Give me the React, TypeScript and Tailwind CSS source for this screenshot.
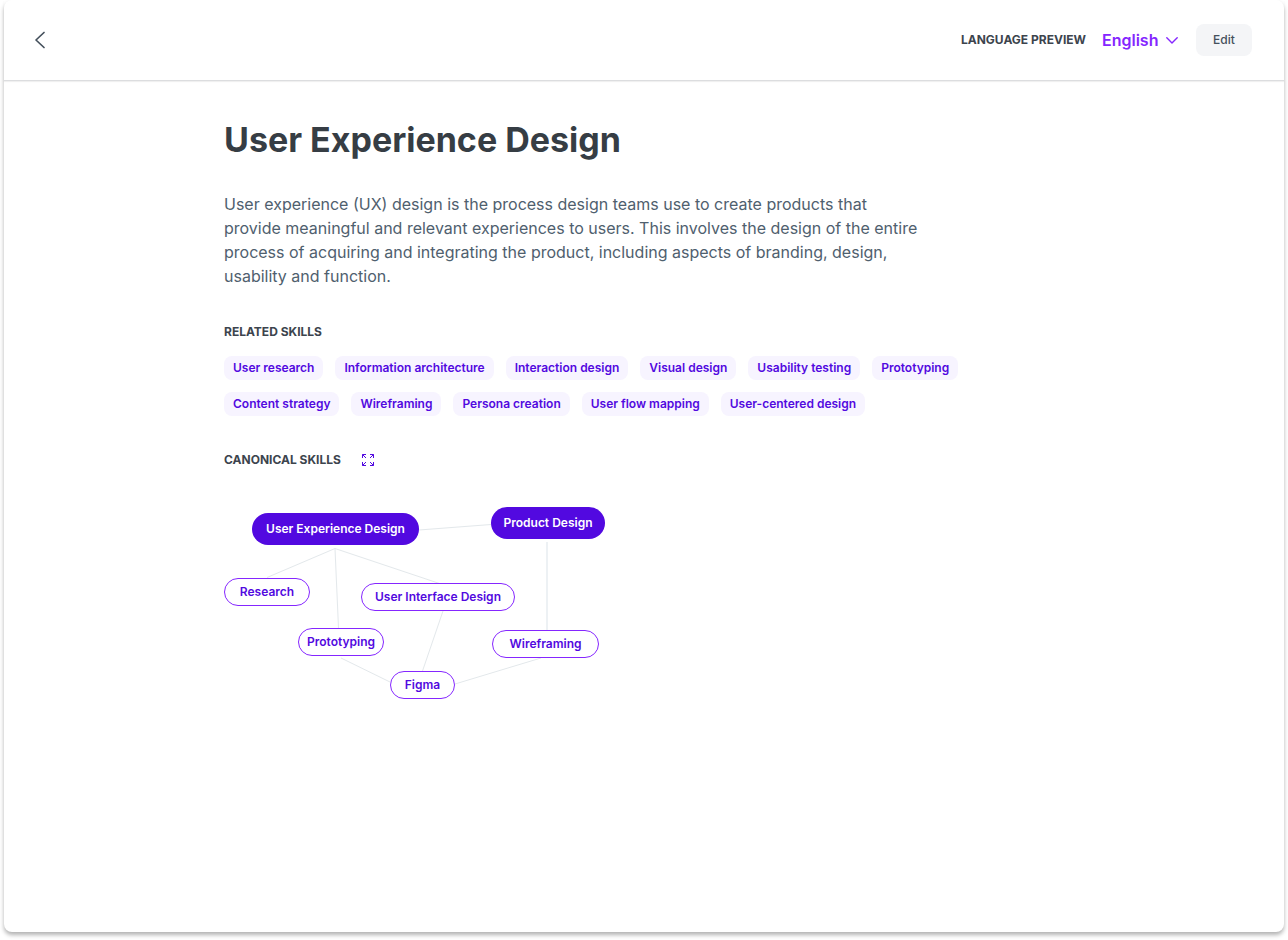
import { useState } from "react";

const relatedSkills = [
  "User research",
  "Information architecture",
  "Interaction design",
  "Visual design",
  "Usability testing",
  "Prototyping",
  "Content strategy",
  "Wireframing",
  "Persona creation",
  "User flow mapping",
  "User-centered design",
];

type SkillNode = { label: string; primary?: boolean; place: string };

const nodes: SkillNode[] = [
  { label: "User Experience Design", primary: true, place: "left-[28px] top-[6px] w-[167px]" },
  { label: "Product Design", primary: true, place: "left-[267px] top-0 w-[114px]" },
  { label: "Research", place: "left-0 top-[71px] w-[86px]" },
  { label: "User Interface Design", place: "left-[137px] top-[76px] w-[154px]" },
  { label: "Prototyping", place: "left-[74px] top-[121px] w-[86px]" },
  { label: "Wireframing", place: "left-[268px] top-[123px] w-[107px]" },
  { label: "Figma", place: "left-[166px] top-[164px] w-[65px]" },
];

function Header() {
  const [language, setLanguage] = useState("English");
  return (
    <header className="box-content flex h-20 items-center justify-between border-b border-[#dcdddf] pr-8 pl-6 shadow-[0_1px_1px_rgba(0,0,0,0.06)]">
      <button type="button" aria-label="Back" className="flex size-6 items-center justify-center text-[#44505c]">
        <svg viewBox="0 0 24 24" className="size-6" fill="none" stroke="currentColor" strokeWidth="1.7" strokeLinecap="round" strokeLinejoin="round">
          <path d="M16 4.5 8 12l8 7.5" />
        </svg>
      </button>
      <div className="flex items-center">
        <label htmlFor="language" className="mr-4 text-xs font-bold text-[#3c444d]">
          LANGUAGE PREVIEW
        </label>
        <div className="relative mr-4 flex items-center text-[#8526ff]">
          <select
            id="language"
            value={language}
            onChange={(e) => setLanguage(e.target.value)}
            className="w-[78px] appearance-none bg-transparent text-base font-semibold"
          >
            <option>English</option>
            <option>Français</option>
          </select>
          <svg viewBox="0 0 12 8" className="pointer-events-none absolute right-[2px] h-2 w-3" fill="none" stroke="currentColor" strokeWidth="1.4" strokeLinecap="round" strokeLinejoin="round">
            <path d="M.8 1.8 6 7l5.200-5.200" />
          </svg>
        </div>
        <button type="button" className="h-8 w-14 rounded-lg bg-[#f4f5f7] text-xs font-medium text-[#44505c]">
          Edit
        </button>
      </div>
    </header>
  );
}

function SkillGraph() {
  return (
    <div className="relative mt-[39px] h-48 w-96">
      <svg viewBox="0 0 384 192" className="absolute inset-0 size-full" fill="none" stroke="#e3e8eb">
        <path d="M195 23 267 17.5M43 70.5 111 41.5 114.5 121M111 41.5 217 77M219 104 198.5 164M117 151 166 175M231 177 317 151" />
        <path d="M323 35V123" stroke="#e9eef2" strokeWidth="1.6" />
      </svg>
      {nodes.map((node) => (
        <button
          key={node.label}
          type="button"
          className={`absolute flex items-center justify-center rounded-full text-xs font-semibold whitespace-nowrap ${
            node.primary ? "h-8 bg-[#5209e0] text-white" : "h-7 border border-[#8526ff] bg-white text-[#5209e0]"
          } ${node.place}`}
        >
          {node.label}
        </button>
      ))}
    </div>
  );
}

export default function App() {
  return (
    <div className="min-h-screen bg-white px-1 pb-2 font-['Inter',sans-serif]">
      <div className="min-h-[calc(100vh-8px)] rounded-lg bg-white shadow-[0_3px_4px_rgba(0,0,0,0.3)]">
        <Header />
        <main className="mx-auto max-w-[840px] pt-[35px]">
          <h1 className="text-[34px] leading-12 font-bold text-[#363d44]">User Experience Design</h1>
          <p className="mt-7 max-w-[700px] text-base leading-6 text-[#4f606e]">
            User experience (UX) design is the process design teams use to create products that provide meaningful and
            relevant experiences to users. This involves the design of the entire process of acquiring and integrating
            the product, including aspects of branding, design, usability and function.
          </p>
          <section className="mt-9">
            <h2 className="text-xs leading-4 font-bold text-[#3c444d] uppercase">Related skills</h2>
            <ul className="mt-4 flex flex-wrap gap-3">
              {relatedSkills.map((skill) => (
                <li key={skill} className="rounded-lg bg-[#f7f4ff] px-[9px] text-xs leading-6 font-semibold text-[#5209e0]">
                  {skill}
                </li>
              ))}
            </ul>
          </section>
          <section className="mt-9">
            <div className="flex items-center gap-5">
              <h2 className="text-xs leading-4 font-bold text-[#3c444d] uppercase">Canonical skills</h2>
              <button type="button" aria-label="Expand canonical skills" className="text-[#5209e0]">
                <svg viewBox="0 0 14 14" className="size-3.5" fill="none" stroke="currentColor">
                  <path d="M1.500 5V1.500H5M1.500 1.500l3.500 3.500M9 1.500h3.500V5M12.500 1.500 9 5M1.500 9v3.500H5M1.500 12.500 5 9M12.500 9v3.500H9M12.500 12.500 9 9" />
                </svg>
              </button>
            </div>
            <SkillGraph />
          </section>
        </main>
      </div>
    </div>
  );
}
